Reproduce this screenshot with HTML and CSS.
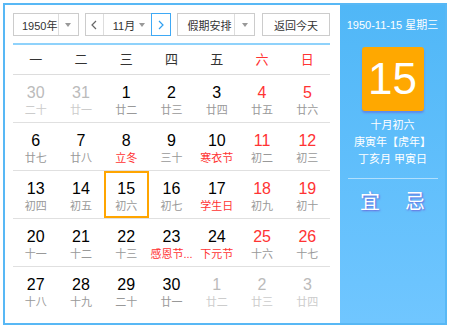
FILE: index.html
```html
<!DOCTYPE html>
<html lang="zh-CN">

<head>
    <meta charset="UTF-8">
    <meta name="viewport" content="width=device-width, initial-scale=1.0">
    <title>万年历</title>
    <link rel="stylesheet" href="styles.css">
</head>

<body>
    <div class="calendar">
        <div class="main">
            <div class="toolbar">
                <div class="select year">
                    <span class="field">1950年</span>
                    <span class="drop"><i class="caret"></i></span>
                </div>
                <div class="select month">
                    <span class="step prev">
                        <svg width="6" height="10" viewBox="0 0 6 10"><polyline points="5,1 1,5 5,9" fill="none" stroke="#666" stroke-width="1.2"/></svg>
                    </span>
                    <span class="field">11月<i class="caret"></i></span>
                    <span class="step next">
                        <svg width="6" height="10" viewBox="0 0 6 10"><polyline points="1,1 5,5 1,9" fill="none" stroke="#2f9ff0" stroke-width="1.2"/></svg>
                    </span>
                </div>
                <div class="select holiday">
                    <span class="field">假期安排</span>
                    <span class="drop"><i class="caret"></i></span>
                </div>
                <div class="btn-today">返回今天</div>
            </div>
            <div class="rule"></div>

            <div class="weekdays">
                <span>一</span><span>二</span><span>三</span><span>四</span><span>五</span>
                <span class="red">六</span><span class="red">日</span>
            </div>

            <div class="days">
                <div class="day other"><b>30</b><em>二十</em></div>
                <div class="day other"><b>31</b><em>廿一</em></div>
                <div class="day"><b>1</b><em>廿二</em></div>
                <div class="day"><b>2</b><em>廿三</em></div>
                <div class="day"><b>3</b><em>廿四</em></div>
                <div class="day weekend"><b>4</b><em>廿五</em></div>
                <div class="day weekend"><b>5</b><em>廿六</em></div>

                <div class="day"><b>6</b><em>廿七</em></div>
                <div class="day"><b>7</b><em>廿八</em></div>
                <div class="day"><b>8</b><em class="fest">立冬</em></div>
                <div class="day"><b>9</b><em>三十</em></div>
                <div class="day"><b>10</b><em class="fest">寒衣节</em></div>
                <div class="day weekend"><b>11</b><em>初二</em></div>
                <div class="day weekend"><b>12</b><em>初三</em></div>

                <div class="day"><b>13</b><em>初四</em></div>
                <div class="day"><b>14</b><em>初五</em></div>
                <div class="day today"><b>15</b><em>初六</em></div>
                <div class="day"><b>16</b><em>初七</em></div>
                <div class="day"><b>17</b><em class="fest">学生日</em></div>
                <div class="day weekend"><b>18</b><em>初九</em></div>
                <div class="day weekend"><b>19</b><em>初十</em></div>

                <div class="day"><b>20</b><em>十一</em></div>
                <div class="day"><b>21</b><em>十二</em></div>
                <div class="day"><b>22</b><em>十三</em></div>
                <div class="day"><b>23</b><em class="fest">感恩节...</em></div>
                <div class="day"><b>24</b><em class="fest">下元节</em></div>
                <div class="day weekend"><b>25</b><em>十六</em></div>
                <div class="day weekend"><b>26</b><em>十七</em></div>

                <div class="day last"><b>27</b><em>十八</em></div>
                <div class="day last"><b>28</b><em>十九</em></div>
                <div class="day last"><b>29</b><em>二十</em></div>
                <div class="day last"><b>30</b><em>廿一</em></div>
                <div class="day last other"><b>1</b><em>廿二</em></div>
                <div class="day last other"><b>2</b><em>廿三</em></div>
                <div class="day last other"><b>3</b><em>廿四</em></div>
            </div>
        </div>

        <div class="side">
            <div class="side-date">1950-11-15 星期三</div>
            <div class="big-day">15</div>
            <div class="lunar">
                <p>十月初六</p>
                <p>庚寅年【虎年】</p>
                <p>丁亥月 甲寅日</p>
            </div>
            <div class="side-rule"></div>
            <div class="yiji">
                <span>宜</span><span>忌</span>
            </div>
        </div>
    </div>
</body>

</html>
```

FILE: styles.css
```css
* {
    margin: 0;
    padding: 0;
    box-sizing: border-box;
}

body {
    margin: 3px;
    background: #fff;
    font-family: "Liberation Sans", "Noto Sans CJK SC", sans-serif;
    color: #222;
}

.calendar {
    display: flex;
    width: 444px;
    height: 322px;
    border: 2px solid #58b8f5;
    background: #fff;
}

.main {
    width: 335px;
    padding: 8px 10px 0 8px;
}

/* 顶部工具条 */
.toolbar {
    display: flex;
    height: 23px;
    font-size: 11px;
    color: #333;
    white-space: nowrap;
}

.select {
    display: flex;
    height: 23px;
    border: 1px solid #ccc;
    background: #fff;
}

.select .field {
    display: flex;
    align-items: center;
    flex: 1;
    padding-left: 8px;
}

.select .drop {
    display: flex;
    align-items: center;
    justify-content: center;
    width: 20px;
    border-left: 1px solid #ddd;
}

.caret {
    display: inline-block;
    width: 0;
    height: 0;
    border-left: 3.5px solid transparent;
    border-right: 3.5px solid transparent;
    border-top: 4px solid #999;
}

.year {
    width: 66px;
}

.month {
    width: 86px;
    margin-left: 6px;
}

.month .field {
    justify-content: space-between;
    padding: 0 6px 0 9px;
    border-left: 1px solid #ddd;
    border-right: 1px solid #ddd;
}

.month .step {
    display: flex;
    align-items: center;
    justify-content: center;
    width: 17px;
}

.month .next {
    width: 20px;
    height: 23px;
    margin: -1px;
    border: 1px solid #3fa9f5;
}

.holiday {
    width: 79px;
    margin-left: 6px;
}

.holiday .field {
    padding-left: 10px;
}

.btn-today {
    display: flex;
    align-items: center;
    justify-content: center;
    width: 68px;
    height: 23px;
    margin-left: 7px;
    border: 1px solid #ccc;
}

.rule {
    height: 2px;
    margin-top: 7px;
    background: #8fd2fb;
}

/* 日历表格 */
.weekdays {
    display: grid;
    grid-template-columns: repeat(7, 1fr);
    height: 30px;
    border-bottom: 1px solid #ddd;
    font-size: 13px;
    line-height: 29px;
    text-align: center;
    color: #333;
}

.red {
    color: #ff3333;
}

.days {
    display: grid;
    grid-template-columns: repeat(7, 1fr);
}

.day {
    height: 48px;
    padding-top: 9px;
    border-bottom: 1px solid #e0e0e0;
    text-align: center;
}

.day.last {
    border-bottom: none;
}

.day b {
    display: block;
    font-size: 16px;
    line-height: 18px;
    font-weight: normal;
    color: #000;
}

.day em {
    display: block;
    font-size: 11px;
    line-height: 16px;
    font-style: normal;
    color: #999;
}

.day.weekend b {
    color: #ff3333;
}

.day em.fest {
    color: #ff3333;
}

.day.other b {
    color: #bbb;
}

.day.other em {
    color: #ccc;
}

.day.today {
    box-shadow: inset 0 0 0 2px #ffa500;
}

/* 右侧面板 */
.side {
    flex: 1;
    padding-top: 12px;
    background: linear-gradient(#50b7f7, #70c6ff);
    color: #fff;
    text-align: center;
}

.side-date {
    font-size: 11px;
    line-height: 16px;
}

.big-day {
    width: 62px;
    height: 64px;
    margin: 14px auto 0;
    border-radius: 3px;
    background: #ffa800;
    font-size: 44px;
    line-height: 64px;
    box-shadow: 0 2px 2px rgba(100, 90, 220, .5);
}

.lunar {
    margin-top: 6px;
    font-size: 11px;
    line-height: 17px;
}

.side-rule {
    width: 90px;
    height: 1px;
    margin: 10px auto 0;
    background: rgba(255, 255, 255, .5);
}

.yiji {
    display: flex;
    justify-content: center;
    gap: 25px;
    margin-top: 11px;
    font-size: 20px;
    line-height: 24px;
    text-shadow: 1px 1px 2px #6a5fd8;
}
```
